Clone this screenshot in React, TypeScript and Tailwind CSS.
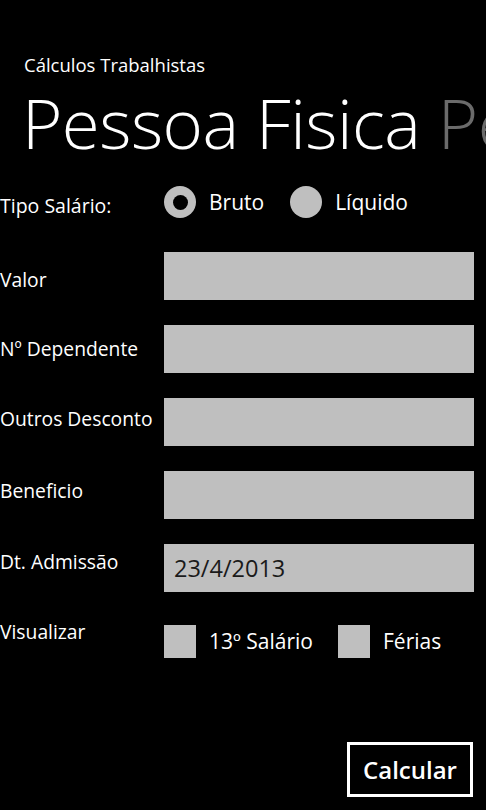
import React from "react";

const fields = [
  { label: "Valor", value: "", pad: "pt-[16px]" },
  { label: "Nº Dependente", value: "", pad: "pt-[12px]" },
  { label: "Outros Desconto", value: "", pad: "pt-[9px]" },
  { label: "Beneficio", value: "", pad: "pt-[8px]" },
  { label: "Dt. Admissão", value: "23/4/2013", pad: "pt-[6px]" },
];

const Radio = ({ checked, label }: { checked?: boolean; label: string }) => (
  <div className="flex items-center">
    <div className="w-[32px] h-[32px] rounded-full bg-[#bfbfbf] flex items-center justify-center">
      {checked && <div className="w-[15px] h-[15px] rounded-full bg-black" />}
    </div>
    <span className="ml-[13px] text-[21px] leading-none">{label}</span>
  </div>
);

const Check = ({ label }: { label: string }) => (
  <div className="flex items-center">
    <div className="w-[32px] h-[33px] bg-[#bfbfbf]" />
    <span className="ml-[13px] text-[21px] leading-none">{label}</span>
  </div>
);

export default function App() {
  return (
    <div
      className="w-[486px] h-[810px] bg-black text-white overflow-hidden flex flex-col"
      style={{ fontFamily: '"Open Sans", "Noto Sans", sans-serif' }}
    >
      <div className="pl-6 pt-[55px] text-[18.5px] leading-[20px]">Cálculos Trabalhistas</div>
      <div className="pl-[22px] whitespace-nowrap overflow-hidden text-[69px] leading-[95px] font-light tracking-[-0.5px]">
        Pessoa Fisica <span className="text-[#6b6b6b]">Pe</span>
      </div>

      <div className="flex items-center mt-[14px] h-[36px]">
        <span className="w-[164px] text-[19.5px] leading-none pt-[8px]">Tipo Salário:</span>
        <div className="flex items-center gap-[26px]">
          <Radio checked label="Bruto" />
          <Radio label="Líquido" />
        </div>
      </div>

      <div className="mt-[32px] flex flex-col gap-[25px]">
        {fields.map((f) => (
          <div key={f.label} className="flex h-[48px]">
            <span className={`w-[164px] text-[19.3px] leading-[24px] ${f.pad}`}>{f.label}</span>
            <div className="w-[310px] h-[48px] bg-[#bfbfbf] text-[#1a1a1a] text-[23.5px] flex items-center pl-[10px] pt-[2px]">
              {f.value}
            </div>
          </div>
        ))}
        <div className="flex h-[48px]">
          <span className="w-[164px] text-[19.3px] leading-[24px] pt-[3px]">Visualizar</span>
          <div className="flex items-center gap-[25px] h-[48px] pt-[1px]">
            <Check label="13º Salário" />
            <Check label="Férias" />
          </div>
        </div>
      </div>

      <div className="flex justify-end pr-[13px] mt-[77px]">
        <button className="w-[126px] h-[55px] border-[3px] border-white text-[24px] font-semibold text-white bg-black">
          Calcular
        </button>
      </div>
    </div>
  );
}
